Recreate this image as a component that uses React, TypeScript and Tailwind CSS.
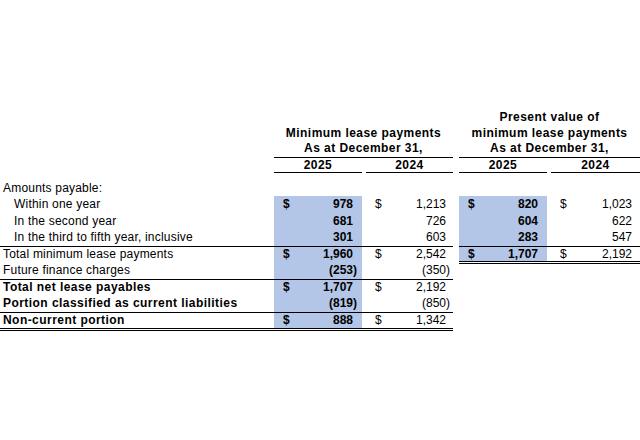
import clsx from "clsx"

type Amt = { d?: boolean; v: string }

const blue = "bg-[#b4c6e7]"

// one number cell, "$" on the left and the figure on the right (accounting style)
const Num = ({ amt, w, pr, hl }: { amt?: Amt; w: string; pr: string; hl?: boolean }) => (
  <div className={clsx("flex h-full items-center justify-between pl-[9px]", w, pr, hl && `${blue} font-bold`)}>
    <span>{amt?.d ? "$" : ""}</span>
    <span>
      {amt?.v}
      {amt && !amt.v.startsWith("(") && <span className="invisible">)</span>}
    </span>
  </div>
)

type RowProps = {
  label: string
  indent?: boolean
  bold?: boolean
  a: Amt
  b: Amt
  c?: Amt
  e?: Amt
  leftCls?: string
  rightCls?: string
  h?: string
}

const Row = ({ label, indent, bold, a, b, c, e, leftCls = "h-[16.5px]", rightCls = "h-[16.5px]", h = "h-[16.5px]" }: RowProps) => (
  <div className={clsx("flex items-start", h)}>
    <div className={clsx("flex w-[453px] border-black", leftCls)}>
      <div
        className={clsx(
          "flex h-full w-[274px] items-center whitespace-nowrap",
          indent ? "pl-[14px]" : "pl-[3px]",
          bold ? "font-bold tracking-[0.45px]" : "tracking-[0.2px]"
        )}
      >
        {label}
      </div>
      <Num amt={a} w="w-[88px]" pr="pr-[5px]" hl />
      <div className="w-[4px]" />
      <Num amt={b} w="w-[87px]" pr="pr-[3px]" />
    </div>
    <div className="w-[6px]" />
    <div className={clsx("flex w-[181px] border-black", rightCls)}>
      {c ? <Num amt={c} w="w-[88px]" pr="pr-[5px]" hl /> : <div className="w-[88px]" />}
      <div className="w-[4px]" />
      {e ? <Num amt={e} w="w-[89px]" pr="pr-[4px]" /> : <div className="w-[89px]" />}
    </div>
  </div>
)

export default function App() {
  return (
    <div className="h-[440px] w-[640px] bg-white pt-[110px] font-['Liberation_Sans',Arial,sans-serif] text-[12px] leading-[16.5px] text-black">
      {/* Column headers */}
      <div className="flex items-end font-bold leading-[15.5px] tracking-[0.45px]">
        <div className="w-[274px]" />
        <div className="w-[179px] border-b border-black text-center">
          Minimum lease payments
          <br />
          As at December 31,
        </div>
        <div className="w-[6px]" />
        <div className="w-[181px] border-b border-black text-center">
          Present value of
          <br />
          minimum lease payments
          <br />
          As at December 31,
        </div>
      </div>
      <div className="flex h-[15.5px] font-bold leading-[15px] tracking-[0.45px]">
        <div className="w-[274px]" />
        <div className="w-[88px] border-b border-black text-center">2025</div>
        <div className="w-[4px]" />
        <div className="w-[87px] border-b border-black text-center">2024</div>
        <div className="w-[6px]" />
        <div className="w-[88px] border-b border-black text-center">2025</div>
        <div className="w-[4px]" />
        <div className="w-[89px] border-b border-black text-center">2024</div>
      </div>

      {/* Rows */}
      <div className="flex h-[23px] items-end pl-[3px] tracking-[0.2px]">Amounts payable:</div>
      <Row label="Within one year" indent a={{ d: true, v: "978" }} b={{ d: true, v: "1,213" }} c={{ d: true, v: "820" }} e={{ d: true, v: "1,023" }} />
      <Row label="In the second year" indent a={{ v: "681" }} b={{ v: "726" }} c={{ v: "604" }} e={{ v: "622" }} />
      <Row label="In the third to fifth year, inclusive" indent a={{ v: "301" }} b={{ v: "603" }} c={{ v: "283" }} e={{ v: "547" }} />
      <Row
        label="Total minimum lease payments"
        a={{ d: true, v: "1,960" }}
        b={{ d: true, v: "2,542" }}
        c={{ d: true, v: "1,707" }}
        e={{ d: true, v: "2,192" }}
        leftCls="h-[16.5px] border-t"
        rightCls="h-[18.5px] border-t border-b-[3px] border-double"
      />
      <Row label="Future finance charges" a={{ v: "(253)" }} b={{ v: "(350)" }} />
      <Row label="Total net lease payables" bold a={{ d: true, v: "1,707" }} b={{ d: true, v: "2,192" }} leftCls="h-[16.5px] border-t" />
      <Row label="Portion classified as current liabilities" bold a={{ v: "(819)" }} b={{ v: "(850)" }} />
      <Row
        label="Non-current portion"
        bold
        a={{ d: true, v: "888" }}
        b={{ d: true, v: "1,342" }}
        h="h-[19.5px]"
        leftCls="h-[19.5px] border-t border-b-[3px] border-double"
      />
    </div>
  )
}
